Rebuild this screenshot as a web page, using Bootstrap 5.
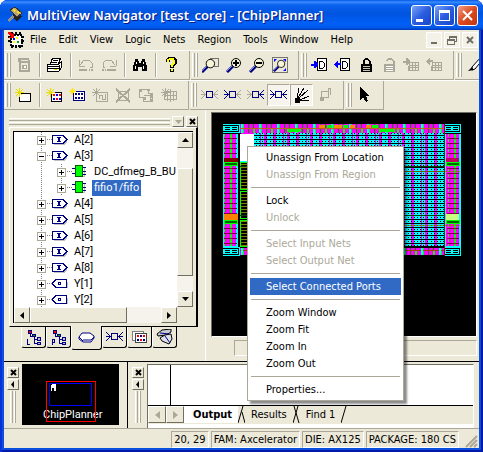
<!DOCTYPE html>
<html lang="en">
<head>
<meta charset="utf-8">
<meta name="viewport" content="width=device-width, initial-scale=1">
<title>MultiView Navigator</title>
<link href="https://cdn.jsdelivr.net/npm/bootstrap@5.3.0/dist/css/bootstrap.min.css" rel="stylesheet">
<style>
:root{--face:#ece9d8;--dark:#aca899;--sel:#316ac5;--ui:"DejaVu Sans Condensed","Noto Sans",sans-serif}
body{font:11px/16px var(--ui);color:#000;background:#fff;overflow:hidden}
button{font:inherit;color:inherit;padding:0;border:0;background:none;border-radius:0}
svg{display:block;flex:none}
svg.px{shape-rendering:crispEdges}
.window{background:#0a50e0;padding:0 4px 4px;border-radius:8px 8px 0 0;box-shadow:inset 2px 0 #0831d9,inset -2px 0 #0019a8,inset 0 -2px #0019a8}
.titlebar{height:30px;margin:0 -4px;padding:0 5px 0 7px;border-radius:8px 8px 0 0;background:linear-gradient(#0058e6 0,#3c8cff 7%,#0a62ee 16%,#0054e0 45%,#0060f8 80%,#0058e8 92%,#0038b8 100%);color:#fff;font:600 13px/20px "Noto Sans",sans-serif;text-shadow:1px 1px #0a1883}
.tight{gap:2px}
.capbtn{width:21px;height:21px;border:1px solid #fff;border-radius:3px;background:linear-gradient(135deg,#7aa4f8,#2a5de0 50%,#1846c8)}
.capbtn.shut{background:linear-gradient(135deg,#f0a088,#dc4a20 50%,#c03410)}
.client{background:var(--face)}
.menubar{height:20px;padding:0 1px 0 4px}
.menubar nav button{padding:0 6px}
.mdi{width:16px;height:16px;background:#f4f2e8!important;border:1px solid #fff!important}
.toolrow{height:30px;border-top:1px solid #fff}
.band{height:29px;border-bottom:1px solid var(--dark);border-right:1px solid var(--dark);margin-right:1px}
.tail{width:7px}
.grip{width:8px;height:24px;flex:none;background:linear-gradient(90deg,transparent 0 1px,#fff 1px 2px,var(--face) 2px 3px,var(--dark) 3px 4px,transparent 4px 5px,#fff 5px 6px,var(--dark) 6px 7px,transparent 7px)}
.tool{width:23px;height:22px;display:flex;align-items:center;justify-content:center;flex:none}
.tool.on{background:#f6f4ec;border:1px solid;border-color:var(--dark) #fff #fff var(--dark)}
.rule-v{width:8px;height:24px;flex:none;background:linear-gradient(90deg,transparent 4px,var(--dark) 4px 5px,#fff 5px 6px,transparent 6px)}
.side{width:202px;flex:none;border-right:1px solid #fff;padding:6px 7px 0 5px}
.dragbars{height:7px;border:solid;border-width:1px 0;border-color:#fff var(--dark) var(--dark);background:linear-gradient(transparent 1px,var(--dark) 1px 2px,transparent 2px 3px,#fff 3px 4px,transparent 4px)}
.mini{width:12px;height:11px;background:var(--face)!important;border:1px solid!important;border-color:#fff #716f64 #716f64 #fff!important;display:flex;align-items:center;justify-content:center;flex:none}
.treebox{border:1px solid #fff;border-right:2px solid #000;border-bottom:1px solid #000;padding:3px;height:200px}
.treeview{background:#fff;border:solid #000;border-width:1px 0 0 1px}
.treeview ul{list-style:none;margin:0;padding:0;font:11px/16px Roboto,"Liberation Sans",sans-serif}
.treeview .treerows{height:175px;overflow:hidden;background:repeating-linear-gradient(transparent 0 1px,#fff 1px 2px),linear-gradient(90deg,transparent 27px,#808080 27px 28px,transparent 28px)}
.treerows ul{background:repeating-linear-gradient(transparent 0 1px,#fff 1px 2px),linear-gradient(90deg,transparent 47px,#808080 47px 48px,transparent 48px)}
.treerows li>div{height:16px;white-space:nowrap;display:flex;align-items:center;padding-left:22px}
.treerows ul li>div{padding-left:42px}
.treerows button{padding:0 2px;height:16px}
.treerows .chosen{background:var(--sel);color:#fff}
.bar{background:#f5f3ec}
.thumb{background:var(--face)!important;border:1px solid!important;border-color:#fff #716f64 #716f64 #fff!important;display:flex;align-items:center;justify-content:center;flex:none}
.sq{width:16px;height:16px}
.vbar{width:16px;flex:none}
.vthumb{height:108px;width:16px;margin-top:20px}
.hthumb{width:97px}
.nook{width:16px;background:var(--face)}
.tabs-low{padding-left:12px;height:24px}
.tab-low{width:25px;height:21px;border:1px solid #000!important;border-top:0!important;border-left-color:#fff!important;border-radius:0 0 3px 3px;display:flex;justify-content:center;align-items:center}
.tab-low.on{width:31px;height:24px;margin-top:-1px;background:var(--face)}
.viewcol{padding:2px 2px 0 5px}
.view{background:#000;border:1px solid #716f64;border-right-color:#fff;border-bottom-color:#fff;padding:11px 15px 0 11px;height:225px}
.view svg{width:100%;height:132px}
.well{height:16px;border:1px solid;border-color:var(--dark) #fff #fff var(--dark);margin:3px 0 0 23px}
.dock{height:67px;border-top:1px solid #000}
.dock .grip{height:32px}
.ctl{width:18px;padding-top:3px;gap:1px}
.overview{width:124px;border-right:1px solid #000;padding-top:2px}
.outdock{padding:2px 5px 0 1px}
.output{background:#fff;border:1px solid #716f64;border-right-color:#fff;border-bottom:0}
.sheet{border-bottom:1px solid #000;height:41px}
.sheet i{display:block;width:23px;height:40px;border-right:1px solid #000}
.sheets{background:var(--face);height:18px}
.nav-sq{width:18px;height:17px}
.sheet-tab{padding:0 6px!important;height:17px}
.sheet-tab.first{font-weight:700;background:#fff;padding-left:9px!important}
.status{height:20px;border-top:1px solid var(--dark);padding-top:2px}
.status span{border:1px solid;border-color:var(--dark) #fff #fff var(--dark);padding:0 2px;margin-right:2px;height:17px;line-height:15px;white-space:nowrap}
.popup{position:absolute;left:247px;top:146px;width:157px;background:#fff;border:1px solid var(--dark);padding:2px;box-shadow:3px 3px 2px rgba(0,0,0,.45);z-index:5}
.popup button{display:block;width:100%;height:17px;line-height:17px;text-align:left;padding-left:16px;white-space:nowrap}
.popup button:disabled{color:var(--dark)}
.popup .hot{background:var(--sel);color:#fff}
.popup hr{margin:4px 1px;border:0;height:1px;background:var(--dark);opacity:1}
</style>
<script src="https://cdn.jsdelivr.net/npm/bootstrap@5.3.0/dist/js/bootstrap.bundle.min.js"></script>
</head>
<body>
<svg width="0" height="0" class="position-absolute" aria-hidden="true">
<defs>
<symbol id="plus" viewBox="0 0 11 11"><path d="M1.500 1.500h8v8h-8z" fill="#fff" stroke="#aca899"/><path d="M3 5h5v1H3zM5 3h1v5H5z"/></symbol>
<symbol id="minus" viewBox="0 0 11 11"><path d="M1.500 1.500h8v8h-8z" fill="#fff" stroke="#aca899"/><path d="M3 5h5v1H3z"/></symbol>
<symbol id="dots" viewBox="0 0 5 2"><path d="M0 0h1v1H0zM2 0h1v1H2zM4 0h1v1H4z" fill="#808080"/></symbol>
<symbol id="inport" viewBox="0 0 16 10"><path d="M2 9h10l3-4v2l-3 3H2z" fill="#c0c0c0"/><path d="M.5.500h10.500l4 4-4 4H.5z" fill="#fff" stroke="#000080"/><path d="M5 2h4v1H8v3h1v1H5V6h1V3H5z" fill="#000080"/></symbol>
<symbol id="outport" viewBox="0 0 16 10"><path d="M5 9h11V3h-1v6z" fill="#c0c0c0"/><path d="M14.500.500H4l-4 4 4 4h10.500z" fill="#fff" stroke="#000080"/><path d="M6.500 3.500h2v2h-2z" fill="none" stroke="#000080"/></symbol>
<symbol id="cell" viewBox="0 0 16 14"><path d="M4 12h9V2h-1v9H4z" fill="#c0c0c0"/><path d="M3 0h8v12H3z" fill="#006000"/><path d="M4 1h6v10H4z" fill="#0f0"/><path d="M0 3h3v1H0zM0 8h3v1H0zM11 2h3v1h-3zM11 6h3v1h-3zM11 9h3v1h-3z" fill="#000080"/></symbol>
<symbol id="spark" viewBox="0 0 9 9"><path d="M4 0h1v9H4zM0 4h9v1H0zM1 1h1v1H1zM2 2h1v1H2zM6 2h1v1H6zM7 1h1v1H7zM3 3h3v3H3zM2 6h1v1H2zM1 7h1v1H1zM6 6h1v1H6z"/></symbol>
<symbol id="net" viewBox="0 0 17 10"><path d="M5.500 1.500h6v6h-6z" fill="none" stroke="#000080"/></symbol>
<symbol id="prongl" viewBox="0 0 17 10"><path d="M0 4h5v1H0zM0 0h1v1h1v1h1v1h1v1H3V3H2V2H1V1H0zM0 8h1V7h1V6h1V5h1v1H3v1H2v1H1v1H0z"/></symbol>
<symbol id="prongr" viewBox="0 0 17 10"><path d="M12 4h5v1h-5zM16 0h1v1h-1v1h-1v1h-1v1h-1V3h1V2h1V1h1zM16 9h1V8h-1V7h-1V6h-1V5h-1v1h1v1h1v1h1z"/></symbol>
<symbol id="lens" viewBox="0 0 16 16"><path d="M1 15l6-6" stroke="#000080" stroke-width="3"/><path d="M1 14l5-5" stroke="#8090e0"/><circle cx="10" cy="6" r="4.500" fill="#f8f6d8" stroke="#000"/></symbol>
<symbol id="gate" viewBox="0 0 10 14"><path d="M.5.500h9v12h-9z" fill="#fff" stroke="#000"/><path d="M2.500 3.500h3l2 2v3l-2 2h-3z" fill="#fff" stroke="#000"/></symbol>
<symbol id="arr" viewBox="0 0 7 7"><path d="M0 3h3V0h1l3 3v1L4 7H3V5H0z"/></symbol>
<symbol id="hier" viewBox="0 0 15 15"><path d="M4 3v3h4v7h4M8 9h4" fill="none" stroke="#000080"/><path d="M2 0h4v4H2zM6 4h4v3H6zM11 7h4v4h-4zM11 12h4v3h-4z" fill="#000080"/><path d="M3 1h2v2H3z" fill="#f00"/><path d="M7 5h2v1H7z" fill="#0a0"/><path d="M12 8h2v2h-2zM12 13h2v1h-2z" fill="#c0c0e0"/></symbol>
<pattern id="field" width="23" height="4" patternUnits="userSpaceOnUse"><path fill="#0ff" d="M0 0h23v4H0z"/><path fill="#f0f" d="M4 0h3v4H4zM14 0h1v4h-1zM18 0h3v4h-3z"/><path d="M0 3h23v1H0zM1 1h1v1H1zM4 1h1v1H4zM7 1h1v1H7zM10 1h1v1h-1zM13 1h1v1h-1zM16 1h1v1h-1zM20 1h1v1h-1z"/></pattern>
<pattern id="rim" width="18" height="10" patternUnits="userSpaceOnUse"><path fill="#f0f" d="M0 0h18v10H0z"/><path fill="#0ff" d="M0 0h2v10H0z"/><path fill="#080" d="M7 0h1v10H7zM12 0h1v4h-1z"/><path fill="#0f0" d="M2 0h1v10H2zM12 5h2v5h-2z"/><path fill="#a04000" d="M2 4h16v1H2z"/><path d="M0 9h18v1H0z"/></pattern>
<pattern id="pads" width="16" height="5" patternUnits="userSpaceOnUse"><path fill="#f0f" d="M0 0h16v5H0z"/><path fill="#0f0" d="M1 0h1v3H1zM7 0h2v4H7z"/><path fill="#0ff" d="M13 0h2v5h-2z"/><path fill="#800040" d="M0 4h14v1H0z"/></pattern>
<pattern id="ram" width="8" height="3" patternUnits="userSpaceOnUse"><path d="M0 0h8v3H0z"/><path fill="#808000" d="M1 1h7v1H1z"/></pattern>
<symbol id="corner" viewBox="0 0 17 9"><path fill="#0ff" d="M0 0h17v9H0z"/><path d="M0 1h16v1H0zM0 7h16v1H0zM2 3h5v1H2zM9 3h5v1H9zM2 5h5v1H2zM9 5h5v1H9zM15 1h1v7h-1z"/></symbol>
</defs>
</svg>

<div class="window vh-100 d-flex flex-column position-relative">
  <header class="titlebar d-flex align-items-center">
    <svg class="px me-1" width="16" height="18" viewBox="0 0 16 18"><path d="M1 13L9 5l6 5-5 5-4-3-4 4z" fill="#222"/><path d="M3 4l5-3 7 6-5 4z" fill="#b8a878" stroke="#333"/><path d="M5 4l2-1 2 2-2 1zM9 6l2-1 2 2-2 1z" fill="#ffd820"/><path d="M0 14l5-5 2 2-5 5z" fill="#909090"/></svg>
    <span class="flex-grow-1 text-nowrap">MultiView Navigator [test_core] - [ChipPlanner]</span>
    <div class="d-flex tight">
      <button class="capbtn" aria-label="Minimize"><svg width="19" height="19"><path d="M4 13h7v3H4z" fill="#fff"/></svg></button>
      <button class="capbtn" aria-label="Maximize"><svg width="19" height="19"><path d="M4 4h11v11H4zM5 7v7h9V7z" fill="#fff" fill-rule="evenodd"/></svg></button>
      <button class="capbtn shut" aria-label="Close"><svg width="19" height="19"><path d="M5 5l9 9M14 5l-9 9" stroke="#fff" stroke-width="2"/></svg></button>
    </div>
  </header>

  <div class="client flex-grow-1 d-flex flex-column">
    <div class="menubar d-flex align-items-center">
      <svg class="px" width="16" height="18" viewBox="0 0 16 18"><path d="M2.500 3.500h11v11h-11z" fill="#fff" stroke="#000" stroke-width="2" stroke-dasharray="2 1"/><path d="M3 1h2v3H3zM7 1h2v3H7zM11 1h2v3h-2zM3 14h2v3H3zM7 14h2v3H7zM11 14h2v3h-2zM0 5h3v2H0zM0 9h3v2H0zM13 5h3v2h-3zM13 9h3v2h-3z"/><path d="M4 5h8v8H4z" fill="#fff"/><path d="M0 1l2 0 3 3V2h1v5H1V6h2L0 3z" fill="#f00"/><path d="M8 6h2v2H8zM5 10h2v2H5z" fill="#ff0"/><path d="M9 10h2v2H9z" fill="#0a0"/><path d="M5 7h2v2H5z" fill="#00f"/></svg>
      <nav class="d-flex flex-grow-1" aria-label="Main menu">
        <button>File</button><button>Edit</button><button>View</button><button>Logic</button><button>Nets</button><button>Region</button><button>Tools</button><button>Window</button><button>Help</button>
      </nav>
      <div class="d-flex tight">
        <button class="mdi" aria-label="Minimize document"><svg width="14" height="14"><path d="M4 9h6v2H4z" fill="#716f64"/></svg></button>
        <button class="mdi" aria-label="Restore document"><svg class="px" width="14" height="14"><path d="M4 3h8v6h-2v3H2V6h2zM5 5v1h5v2h1V5zM3 8v3h6V8z" fill="#716f64" fill-rule="evenodd"/></svg></button>
        <button class="mdi" aria-label="Close document"><svg width="14" height="14"><path d="M4 4l6 6M10 4l-6 6" stroke="#716f64" stroke-width="2"/></svg></button>
      </div>
    </div>

    <div class="toolrow d-flex" role="toolbar" aria-label="Standard">
      <div class="band d-flex align-items-center">
        <span class="grip"></span>
        <button class="tool" aria-label="Commit"><svg class="px" width="14" height="16"><path d="M2 2h9l1 2v10H3V4H2z" fill="none" stroke="#aca899" stroke-width="2"/><path d="M3 4h9v2H3zM5 8h5v4H5z" fill="#aca899"/><path d="M7 9h2v2H7z" fill="#fff"/></svg></button>
        <span class="rule-v"></span>
        <button class="tool" aria-label="Print"><svg class="px" width="17" height="16"><path d="M1.500 7.500h11l3-3v6l-3 4h-11z" fill="#fff" stroke="#000"/><path d="M4.500 7l2-6h8l-2 6zM1 9h12M1 11h12M13 8v6" fill="#fff" stroke="#000"/><path d="M7 3h5M6 5h5" stroke="#000"/><path d="M8 12h3v1H8z" fill="#dd0"/></svg></button>
        <span class="rule-v"></span>
        <button class="tool" aria-label="Undo"><svg class="px" width="16" height="16"><path d="M1 9V3M1 9h6M2 8l4-5h5l3 3v4h-2" fill="none" stroke="#aca899"/><path d="M1 13h8M11 13h1M13 13h2" stroke="#aca899" stroke-width="2"/></svg></button>
        <button class="tool" aria-label="Redo"><svg class="px" width="16" height="16"><path d="M15 9V3M15 9H9M14 8l-4-5H5L2 6v4h2" fill="none" stroke="#aca899"/><path d="M6 13h9M4 13h1M1 13h2" stroke="#aca899" stroke-width="2"/></svg></button>
        <span class="rule-v"></span>
        <button class="tool" aria-label="Find"><svg class="px" width="16" height="16"><path d="M3 2h3v2h1v2h2V4h1V2h3v3h1v3h1v6h-5v-4H6v4H1V8h1V5h1z"/><path d="M4 5h1v2H4zM11 5h1v2h-1zM3 9h1v3H3zM11 9h1v3h-1z" fill="#fff"/></svg></button>
        <span class="rule-v"></span>
        <button class="tool" aria-label="Help"><svg class="px" width="12" height="16"><path d="M3 5V3l2-2h3l2 2v3L7 9v2M7 12v3" fill="none" stroke="#000" stroke-width="4"/><path d="M3 5V3l2-1h3l1 2v2L7 8v2M7 12v2" fill="none" stroke="#ff0" stroke-width="2"/></svg></button>
        <span class="tail"></span>
      </div>
      <div class="band d-flex align-items-center">
        <span class="grip"></span>
        <button class="tool" aria-label="Zoom area"><svg width="18" height="16"><path d="M8.500 1.500h8v8h-8z" fill="none" stroke="#000" stroke-dasharray="1 1"/><use href="#lens" x="-1" y="1" width="15" height="15"/></svg></button>
        <button class="tool" aria-label="Zoom in"><svg width="16" height="16"><use href="#lens" width="16" height="16"/><path d="M7 6h6M10 3v6" stroke="#000" stroke-width="2"/></svg></button>
        <button class="tool" aria-label="Zoom out"><svg width="16" height="16"><use href="#lens" width="16" height="16"/><path d="M7 6h6" stroke="#000" stroke-width="2"/></svg></button>
        <button class="tool" aria-label="Zoom fit"><svg width="16" height="16"><path d="M.5.500h15v15H.5z" fill="none" stroke="#000" stroke-dasharray="1 1"/><use href="#lens" x="1" y="2" width="13" height="13"/><path d="M2 2h3L2 5zM14 2v3l-3-3zM14 14h-3l3-3z" fill="#00f"/></svg></button>
        <span class="tail"></span>
      </div>
      <div class="band d-flex align-items-center">
        <span class="grip"></span>
        <button class="tool" aria-label="Assign"><svg class="px" width="17" height="14"><use href="#gate" x="6" width="10" height="14"/><use href="#arr" y="3" width="7" height="7" fill="#00f"/></svg></button>
        <button class="tool" aria-label="Unassign"><svg class="px" width="17" height="14"><use href="#gate" x="6" width="10" height="14"/><use href="#arr" x="-7" y="-10" width="7" height="7" fill="#00f" transform="rotate(180)"/></svg></button>
        <button class="tool" aria-label="Lock"><svg class="px" width="12" height="14"><path d="M3.500 6V3l2-2h2l2 2v3" fill="none" stroke="#000" stroke-width="2"/><path d="M1 6h11v8H1z"/><path d="M3 8h7v1H3zM3 10h7v1H3zM3 12h7v1H3z" fill="#c8c4b0"/></svg></button>
        <button class="tool" aria-label="Unlock"><svg class="px" width="12" height="14"><path d="M3.500 3l2-2h3l2 2v4" fill="none" stroke="#aca899" stroke-width="2"/><path d="M1 6h11v8H1z" fill="#aca899"/><path d="M3 8h7v1H3zM3 10h7v1H3zM3 12h7v1H3z" fill="#fff"/></svg></button>
        <button class="tool" aria-label="Assign region"><svg class="px" width="17" height="14"><use href="#arr" y="0" width="7" height="7" fill="#aca899"/><path d="M6 4h10v9H5V8h1zM7 5v2h2V5zM10 5v2h2V5zM13 5v2h2V5zM7 8v1h2V8zM10 8v1h2V8zM13 8v1h2V8zM7 10v2h2v-2zM10 10v2h2v-2zM13 10v2h2v-2z" fill="#aca899" fill-rule="evenodd"/></svg></button>
        <button class="tool" aria-label="Unassign region"><svg class="px" width="17" height="14"><use href="#arr" x="-7" y="-7" width="7" height="7" fill="#aca899" transform="rotate(180)"/><path d="M6 4h10v9H5V8h1zM7 5v2h2V5zM10 5v2h2V5zM13 5v2h2V5zM7 8v1h2V8zM10 8v1h2V8zM13 8v1h2V8zM7 10v2h2v-2zM10 10v2h2v-2zM13 10v2h2v-2z" fill="#aca899" fill-rule="evenodd"/></svg></button>
        <span class="tail"></span>
      </div>
      <div class="band d-flex align-items-center flex-grow-1 overflow-hidden border-end-0 me-0">
        <span class="grip"></span>
        <button class="tool" aria-label="Highlight"><svg width="16" height="16"><path d="M5 10L14 0l2 2-8 10-3 1z" fill="#fff" stroke="#000"/><path d="M1 14l4-4 2 3z"/></svg></button>
      </div>
    </div>

    <div class="toolrow d-flex" role="toolbar" aria-label="Regions and nets">
      <div class="band d-flex align-items-center">
        <span class="grip"></span>
        <button class="tool" aria-label="New region"><svg class="px" width="17" height="15"><path d="M4.500 5.500h11v8h-11z" fill="#fff" stroke="#000"/><use href="#spark" width="9" height="9" fill="#e8dc00"/></svg></button>
        <span class="rule-v"></span>
        <button class="tool" aria-label="New logic region"><svg class="px" width="17" height="15"><path d="M5.500 4.500h10v9h-10z" fill="#fff" stroke="#000"/><path d="M7 6h2v2H7zM13 6h2v2h-2zM10 10h2v2h-2z" fill="#f00"/><path d="M10 6h2v2h-2zM7 10h2v2H7zM13 10h2v2h-2z" fill="#00f"/><use href="#spark" width="9" height="9" fill="#e8dc00"/></svg></button>
        <button class="tool" aria-label="New array region"><svg class="px" width="17" height="15"><path d="M4.500 3.500h11v9h-11z" fill="#fff" stroke="#000080"/><path d="M6 5h2v2H6zM9 5h2v2H9zM12 5h2v2h-2zM6 9h2v2H6zM9 9h2v2H9zM12 9h2v2h-2z" fill="#000080"/><use href="#spark" width="7" height="7" fill="#ffe800"/></svg></button>
        <button class="tool" aria-label="Exclusive region"><svg class="px" width="17" height="15"><path d="M4.500 4.500h11v9h-11zM7 11V7h3v4h3V6" fill="none" stroke="#aca899"/><use href="#spark" width="9" height="9" fill="#aca899"/></svg></button>
        <button class="tool" aria-label="Delete region"><svg class="px" width="17" height="15"><path d="M3.500 3.500h10v9h-10z" fill="none" stroke="#aca899"/><path d="M1 1l14 13M15 1L1 14" fill="none" stroke="#aca899" stroke-width="2"/></svg></button>
        <button class="tool" aria-label="Merge regions"><svg class="px" width="17" height="15"><path d="M1.500 1.500h9v4h4v8h-9v-4h-4z" fill="none" stroke="#aca899"/><path d="M6 7h7v1H6zM12 5l4 3-4 3zM5 9h3v3H5zM12 11h3v3h-3zM1 1h3v3H1zM9 1h3v2H9z" fill="#aca899"/></svg></button>
        <button class="tool" aria-label="Region grid"><svg class="px" width="17" height="15"><path d="M3.500 3.500h12v8h-12zM6.500 3v10M9.500 1v13M12.500 3v10M3 7.500h13" fill="none" stroke="#aca899"/><use href="#spark" width="9" height="9" fill="#aca899"/></svg></button>
        <span class="tail"></span>
      </div>
      <div class="band d-flex align-items-center">
        <span class="grip"></span>
        <button class="tool" aria-label="Hide nets"><svg class="px" width="17" height="10"><use href="#net"/><use href="#prongl" fill="#aca899"/><use href="#prongr" fill="#aca899"/></svg></button>
        <button class="tool" aria-label="Input nets"><svg class="px" width="17" height="10"><use href="#net"/><use href="#prongl" fill="#000080"/><use href="#prongr" fill="#aca899"/></svg></button>
        <button class="tool" aria-label="Output nets"><svg class="px" width="17" height="10"><use href="#net"/><use href="#prongl" fill="#aca899"/><use href="#prongr" fill="#000080"/></svg></button>
        <button class="tool on" aria-label="All nets"><svg class="px" width="17" height="10"><use href="#net"/><use href="#prongl" fill="#000080"/><use href="#prongr" fill="#000080"/></svg></button>
        <button class="tool on" aria-label="Ratsnest"><svg class="px" width="16" height="16"><path d="M1 11h5v5H1z"/><path d="M3 11L5 1M4 11L10 1M5 11l9-8M6 13l9-4M6 14l9-1" stroke="#000"/></svg></button>
        <button class="tool" aria-label="Bounding box"><svg class="px" width="16" height="16"><path d="M4.500 12V4.500h7M7 10.500h4.500V1.500h2v6" fill="none" stroke="#aca899"/><path d="M3 10h4v4H3z" fill="#aca899"/></svg></button>
        <span class="tail"></span>
      </div>
      <div class="band d-flex align-items-center">
        <span class="grip"></span>
        <button class="tool" aria-label="Select"><svg class="px" width="11" height="16"><path d="M1 0l9 9H7l2 5-2 1-3-5-3 3z"/></svg></button>
        <span class="tail"></span>
      </div>
    </div>

    <main class="d-flex flex-grow-1">
      <section class="side" aria-label="Ports">
        <div class="d-flex align-items-center tight">
          <div class="dragbars flex-grow-1"></div>
          <button class="mini" aria-label="Panel options"><svg width="7" height="4"><path d="M0 0h7L3.500 4z" fill="#aca899"/></svg></button>
          <button class="mini" aria-label="Close panel"><svg width="7" height="7"><path d="M1 1l5 5M6 1L1 6" stroke="#000" stroke-width="2"/></svg></button>
        </div>
        <div class="treebox">
          <div class="treeview d-flex flex-column h-100">
            <div class="d-flex">
              <ul class="treerows flex-grow-1">
                <li><div><svg class="px" width="11" height="11"><use href="#plus"/></svg><svg class="px" width="5" height="2"><use href="#dots"/></svg><svg class="px" width="16" height="10"><use href="#inport"/></svg><button class="ms-1">A[2]</button></div></li>
                <li><div><svg class="px" width="11" height="11"><use href="#minus"/></svg><svg class="px" width="5" height="2"><use href="#dots"/></svg><svg class="px" width="16" height="10"><use href="#inport"/></svg><button class="ms-1">A[3]</button></div>
                  <ul>
                    <li><div><svg class="px" width="11" height="11"><use href="#plus"/></svg><svg class="px" width="5" height="2"><use href="#dots"/></svg><svg class="px" width="16" height="14"><use href="#cell"/></svg><button class="ms-1">DC_dfmeg_B_BU</button></div></li>
                    <li><div><svg class="px" width="11" height="11"><use href="#plus"/></svg><svg class="px" width="5" height="2"><use href="#dots"/></svg><svg class="px" width="16" height="14"><use href="#cell"/></svg><button class="chosen ms-1">fifio1/fifo</button></div></li>
                  </ul></li>
                <li><div><svg class="px" width="11" height="11"><use href="#plus"/></svg><svg class="px" width="5" height="2"><use href="#dots"/></svg><svg class="px" width="16" height="10"><use href="#inport"/></svg><button class="ms-1">A[4]</button></div></li>
                <li><div><svg class="px" width="11" height="11"><use href="#plus"/></svg><svg class="px" width="5" height="2"><use href="#dots"/></svg><svg class="px" width="16" height="10"><use href="#inport"/></svg><button class="ms-1">A[5]</button></div></li>
                <li><div><svg class="px" width="11" height="11"><use href="#plus"/></svg><svg class="px" width="5" height="2"><use href="#dots"/></svg><svg class="px" width="16" height="10"><use href="#inport"/></svg><button class="ms-1">A[6]</button></div></li>
                <li><div><svg class="px" width="11" height="11"><use href="#plus"/></svg><svg class="px" width="5" height="2"><use href="#dots"/></svg><svg class="px" width="16" height="10"><use href="#inport"/></svg><button class="ms-1">A[7]</button></div></li>
                <li><div><svg class="px" width="11" height="11"><use href="#plus"/></svg><svg class="px" width="5" height="2"><use href="#dots"/></svg><svg class="px" width="16" height="10"><use href="#inport"/></svg><button class="ms-1">A[8]</button></div></li>
                <li><div><svg class="px" width="11" height="11"><use href="#plus"/></svg><svg class="px" width="5" height="2"><use href="#dots"/></svg><svg class="px" width="16" height="10"><use href="#outport"/></svg><button class="ms-1">Y[1]</button></div></li>
                <li><div><svg class="px" width="11" height="11"><use href="#plus"/></svg><svg class="px" width="5" height="2"><use href="#dots"/></svg><svg class="px" width="16" height="10"><use href="#outport"/></svg><button class="ms-1">Y[2]</button></div></li>
              </ul>
              <div class="bar vbar d-flex flex-column">
                <button class="thumb sq" aria-label="Scroll up"><svg width="7" height="4"><path d="M0 4h7L3.500 0z"/></svg></button>
                <div class="thumb vthumb"></div><div class="flex-grow-1"></div>
                <button class="thumb sq" aria-label="Scroll down"><svg width="7" height="4"><path d="M0 0h7L3.500 4z"/></svg></button>
              </div>
            </div>
            <div class="d-flex bar flex-grow-1">
              <button class="thumb sq" aria-label="Scroll left"><svg width="4" height="7"><path d="M4 0v7L0 3.500z"/></svg></button>
              <div class="thumb hthumb"></div><div class="flex-grow-1"></div>
              <button class="thumb sq" aria-label="Scroll right"><svg width="4" height="7"><path d="M0 0v7l4-3.500z"/></svg></button>
              <div class="nook"></div>
            </div>
          </div>
        </div>
        <div class="tabs-low d-flex">
          <button class="tab-low" aria-label="Logical"><svg class="px" width="15" height="15"><use href="#hier"/><path d="M1.500 9v5.500H4" fill="none" stroke="#000080"/></svg></button>
          <button class="tab-low" aria-label="Physical"><svg class="px" width="15" height="15"><use href="#hier"/><path d="M1.500 15V9.500h2v3h-2" fill="none" stroke="#000080"/></svg></button>
          <button class="tab-low on" aria-label="Ports"><svg width="17" height="11"><path d="M1 5l3-4h8l4 3v2l-3 4H5L1 7zM1 5l4 4M16 5l-3 3H5" fill="#fff" stroke="#000080"/></svg></button>
          <button class="tab-low" aria-label="Nets"><svg class="px" width="17" height="10"><use href="#net"/><use href="#prongl" fill="#000080"/><use href="#prongr" fill="#000080"/></svg></button>
          <button class="tab-low" aria-label="Regions"><svg class="px" width="15" height="13"><path d="M.5.500h11v9H.5z" fill="#fff" stroke="#808080"/><path d="M3.500 2.500h11v9h-11z" fill="#fff" stroke="#444"/><path d="M5 4h2v2H5zM11 4h2v2h-2zM8 8h2v2H8z" fill="#f00"/><path d="M8 4h2v2H8zM5 8h2v2H5zM11 8h2v2h-2z" fill="#000080"/></svg></button>
          <button class="tab-low" aria-label="Blocks"><svg width="17" height="16"><path d="M1 5l5-4 9-1v3l-5 3-8 1z" fill="#c8c8d0" stroke="#000"/><path d="M4 9l5-3 6-1 1 5-3 5-7-3z" fill="#e0e0e8" stroke="#000"/><path d="M9 7l5 7M4 4l9 1" stroke="#000090"/></svg></button>
        </div>
      </section>

      <section class="flex-grow-1 viewcol" aria-label="Chip">
        <div class="view">
          <svg class="px" viewBox="0 0 238 132" preserveAspectRatio="none">
            <path fill="#0ff" d="M0 0h238v132H0z"/>
            <path fill="url(#rim)" d="M17 0h204v10H17z"/>
            <path fill="url(#pads)" d="M1 10h14v112H1zM223 10h13v112h-13z"/>
            <path fill="url(#field)" d="M31 9h190v115H31z"/>
            <g transform="translate(0 122)"><path fill="url(#rim)" d="M17 1h204v9H17z"/><path d="M17 0h204v2H17z"/></g>
            <path d="M15 9h2v115h-2zM0 9h31v1H0zM221 9h17v1h-17z"/>
            <path fill="#f0f" d="M18 9h13v1H18z"/>
            <path fill="#fff" d="M17 10h14v27H17z"/>
            <path fill="url(#ram)" d="M17 38h14v85H17z"/>
            <path fill="none" stroke="#0f0" d="M17.500 38.500h13v27h-13zM17.500 67.500h13v27h-13zM17.500 96.500h13v26h-13z"/>
            <path fill="#800000" d="M1 34h14v4H1z"/><path fill="#ff8000" d="M1 90h14v6H1z"/>
            <path fill="#c00060" d="M223 34h13v4h-13z"/><path fill="#c8ff80" d="M223 90h13v6h-13z"/>
            <path fill="#060" stroke="#0f0" d="M1.500 38.500h13v3h-13zM223.500 38.500h13v3h-13zM1.500 96.500h13v3h-13zM223.500 96.500h13v3h-13z"/>
            <path d="M17 42h204M17 91h204" stroke="#004000"/><path d="M31 47h206M31 101h206" stroke="#808000" stroke-opacity=".7"/>
            <path d="M17 4h204" stroke="#c06020"/>
            <path fill="#f80" d="M96 1h6v3h-6zM111 1h8v3h-8zM127 1h5v3h-5zM143 1h5v3h-5z"/><path fill="#0f0" d="M64 5h14v3H64zM104 1h5v3h-5zM120 1h5v3h-5zM149 1h6v3h-6zM158 5h14v3h-14z"/>
            <use href="#corner" width="17" height="9"/><use href="#corner" x="221" width="17" height="9"/><use href="#corner" y="123" width="17" height="9"/><use href="#corner" x="221" y="123" width="17" height="9"/>
            <path stroke="#a00020" d="M221.500 0v132"/>
          </svg>
        </div>
        <div class="well"></div>
      </section>
    </main>

    <div class="dock d-flex">
      <section class="overview d-flex" aria-label="Overview">
        <div class="ctl d-flex flex-column align-items-center">
          <button class="mini" aria-label="Close overview"><svg width="7" height="7"><path d="M1 1l5 5M6 1L1 6" stroke="#000" stroke-width="2"/></svg></button>
          <button class="mini" aria-label="Collapse overview"><svg width="4" height="7"><path d="M3 0v7L0 3.500z"/></svg></button>
          <span class="grip"></span>
        </div>
        <svg class="px" width="97" height="61" role="img" aria-label="ChipPlanner"><path d="M0 0h97v61H0z"/><path d="M27.500 19.500h42v22h-42z" fill="none" stroke="#00f"/><text x="21" y="54" fill="#fff" font-family="Roboto, Liberation Sans, sans-serif" font-size="11">ChipPlanner</text><path d="M24.500 17.500h49v40h-49z" fill="none" stroke="#f00"/><path d="M29 21l2-1h3v7h-2v-3h-2v3h-1z" fill="#fff"/></svg>
      </section>
      <section class="outdock d-flex flex-grow-1" aria-label="Output">
        <div class="ctl d-flex flex-column align-items-center">
          <button class="mini" aria-label="Close output"><svg width="7" height="7"><path d="M1 1l5 5M6 1L1 6" stroke="#000" stroke-width="2"/></svg></button>
          <button class="mini" aria-label="Collapse output"><svg width="4" height="7"><path d="M3 0v7L0 3.500z"/></svg></button>
          <span class="grip"></span>
        </div>
        <div class="output flex-grow-1">
          <div class="sheet"><i></i></div>
          <div class="sheets d-flex">
            <button class="thumb nav-sq" aria-label="Previous sheet"><svg width="5" height="8"><path d="M5 0v8L0 4z" fill="#aca899"/></svg></button>
            <button class="thumb nav-sq" aria-label="Next sheet"><svg width="5" height="8"><path d="M0 0v8l5-4z" fill="#aca899"/></svg></button>
            <button class="sheet-tab first">Output</button>
            <svg width="7" height="17"><path d="M0 17L5 0M4 6l3 11" stroke="#000" fill="none"/></svg>
            <button class="sheet-tab">Results</button>
            <svg width="7" height="17"><path d="M0 17L5 0M1 0l5 17" stroke="#000" fill="none"/></svg>
            <button class="sheet-tab">Find 1</button>
            <svg width="7" height="17"><path d="M0 17L5 0" stroke="#000" fill="none"/></svg>
          </div>
        </div>
      </section>
    </div>

    <footer class="status d-flex justify-content-end">
      <span>20, 29</span><span>FAM: Axcelerator</span><span>DIE: AX125</span><span>PACKAGE: 180 CS</span>
      <svg width="18" height="17"><path d="M5 16L16 5M9 16l7-7M13 16l3-3" stroke="#aca899" stroke-width="2"/></svg>
    </footer>
  </div>

  <div class="popup" role="menu">
    <button role="menuitem">Unassign From Location</button>
    <button role="menuitem" disabled>Unassign From Region</button>
    <hr>
    <button role="menuitem">Lock</button>
    <button role="menuitem" disabled>Unlock</button>
    <hr>
    <button role="menuitem" disabled>Select Input Nets</button>
    <button role="menuitem" disabled>Select Output Net</button>
    <hr>
    <button role="menuitem" class="hot">Select Connected Ports</button>
    <hr>
    <button role="menuitem">Zoom Window</button>
    <button role="menuitem">Zoom Fit</button>
    <button role="menuitem">Zoom In</button>
    <button role="menuitem">Zoom Out</button>
    <hr>
    <button role="menuitem">Properties...</button>
  </div>
</div>
</body>
</html>
